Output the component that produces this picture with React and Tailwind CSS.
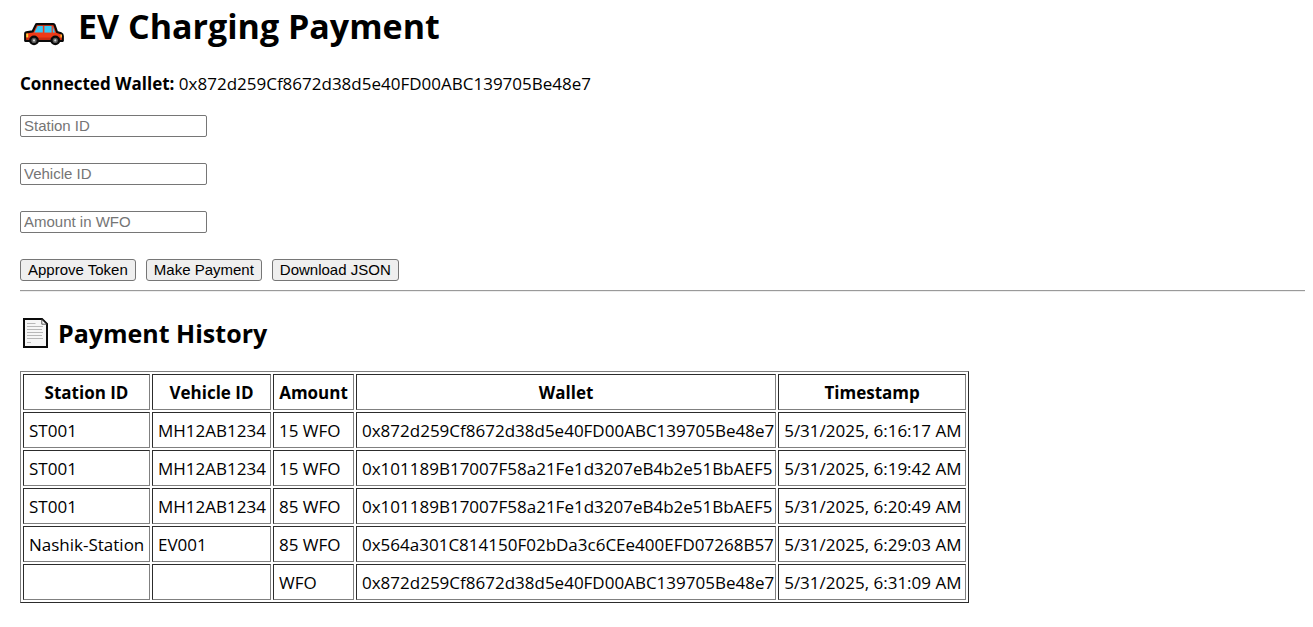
const columns = [
  { label: 'Station ID', width: 'w-[127px]' },
  { label: 'Vehicle ID', width: 'w-[119px]' },
  { label: 'Amount', width: 'w-[81px]' },
  { label: 'Wallet', width: 'w-[416px]' },
  { label: 'Timestamp', width: 'w-[188px]' },
];

const payments = [
  ['ST001', 'MH12AB1234', '15 WFO', '0x872d259Cf8672d38d5e40FD00ABC139705Be48e7', '5/31/2025, 6:16:17 AM'],
  ['ST001', 'MH12AB1234', '15 WFO', '0x101189B17007F58a21Fe1d3207eB4b2e51BbAEF5', '5/31/2025, 6:19:42 AM'],
  ['ST001', 'MH12AB1234', '85 WFO', '0x101189B17007F58a21Fe1d3207eB4b2e51BbAEF5', '5/31/2025, 6:20:49 AM'],
  ['Nashik-Station', 'EV001', '85 WFO', '0x564a301C814150F02bDa3c6CEe400EFD07268B57', '5/31/2025, 6:29:03 AM'],
  ['', '', 'WFO', '0x872d259Cf8672d38d5e40FD00ABC139705Be48e7', '5/31/2025, 6:31:09 AM'],
];

const cellBorder =
  'border border-t-[#2c2c2c] border-l-[#2c2c2c] border-r-[#808080] border-b-[#808080] whitespace-nowrap';

function CarIcon() {
  return (
    <svg viewBox="0 0 40 24" className="h-6 w-10" aria-hidden="true">
      <path
        d="M12.8 2.2H29.4Q30.2 2.2 30.5 3L33 10L37 11.2Q38.8 12 38.8 14V18.8H1.2V11.4Q1.2 10.6 2.2 10.4L8.6 9.4L11.8 2.9Q12.1 2.2 12.8 2.2Z"
        fill="#f03a17"
        stroke="#0a0a0a"
        strokeWidth="2.2"
        strokeLinejoin="round"
      />
      <path d="M2.3 15.4H37.7V17.8H2.3Z" fill="#c92a10" />
      <path d="M13.6 4H18.8V10.6H10.4Z" fill="#38c8f4" />
      <path d="M20.4 4H27.6V10.6H20.4Z" fill="#38c8f4" />
      <path d="M28.8 4.6L31 10.6H28.8Z" fill="#38c8f4" />
      <path d="M2.2 11.6H4.2V15.4H2.2Z" fill="#ffd23c" />
      <path d="M36.4 12.4H38V15.4H36.4Z" fill="#ffb02e" />
      <circle cx="10" cy="18.4" r="4.9" fill="#0a0a0a" />
      <circle cx="10" cy="18.4" r="2.6" fill="#5c5c5c" />
      <circle cx="10" cy="18.4" r="1.1" fill="#d0d0d0" />
      <circle cx="31.3" cy="18.4" r="4.9" fill="#0a0a0a" />
      <circle cx="31.3" cy="18.4" r="2.6" fill="#5c5c5c" />
      <circle cx="31.3" cy="18.4" r="1.1" fill="#d0d0d0" />
    </svg>
  );
}

function PageIcon() {
  return (
    <svg viewBox="0 0 25 30" className="h-[30px] w-[25px]" aria-hidden="true">
      <path d="M1 1H19L24 6V29H1Z" fill="#f6f6f6" stroke="#0a0a0a" strokeWidth="2" />
      <path d="M18.8 1.5V6.2H23.5Z" fill="#fff" stroke="#333" strokeWidth="0.8" />
      <path
        d="M4 5.5H12.5M4 8.5H20M4 11.5H19M4 14.5H20M4 17.5H19M4 20.5H20M4 24.5H8"
        stroke="#b8b8b8"
        strokeWidth="1"
      />
    </svg>
  );
}

function TextField({ label }) {
  return (
    <input
      type="text"
      aria-label={label}
      placeholder={label}
      className="block h-[22px] w-[187px] rounded-xs border border-[#767676] bg-white px-[3px] pb-0.5 font-['Liberation_Sans',Arial,sans-serif] text-[15px] leading-[18px] placeholder:text-[#757575]"
    />
  );
}

function ActionButton({ children }) {
  return (
    <button
      type="button"
      className="flex h-[22px] items-center rounded-[3px] border border-[#767676] bg-[#efefef] px-[7px] font-['Liberation_Sans',Arial,sans-serif] text-[15px] leading-5 whitespace-nowrap"
    >
      {children}
    </button>
  );
}

export default function App() {
  return (
    <main className="pt-1 pr-2 pb-6 pl-5 font-['Open_Sans','Noto_Sans',sans-serif] text-[17px] leading-6 text-black">
      <h1 className="flex items-center gap-3.5 pl-1 text-[34px] leading-[44px] font-bold">
        <span className="pt-4"><CarIcon /></span>
        EV Charging Payment
      </h1>
      <p className="mt-6">
        <strong className="font-bold">Connected Wallet:</strong> 0x872d259Cf8672d38d5e40FD00ABC139705Be48e7
      </p>
      <form className="mt-[19px]" onSubmit={(e) => e.preventDefault()}>
        <div className="flex flex-col gap-[26px]">
          <TextField label="Station ID" />
          <TextField label="Vehicle ID" />
          <TextField label="Amount in WFO" />
        </div>
        <div className="mt-[26px] flex gap-2.5">
          <ActionButton>Approve Token</ActionButton>
          <ActionButton>Make Payment</ActionButton>
          <ActionButton>Download JSON</ActionButton>
        </div>
      </form>
      <hr className="mt-[9px] h-0.5 border-t border-b border-t-[#9a9a9a] border-b-[#eeeeee]" />
      <h2 className="mt-6 flex items-center gap-2.5 pl-[3px] text-[25px] leading-[34px] font-bold">
        <PageIcon />
        Payment History
      </h2>
      <table className="mt-[21px] border-separate border-spacing-0.5 border border-t-[#808080] border-r-[#2c2c2c] border-b-[#2c2c2c] border-l-[#808080]">
        <thead>
          <tr>
            {columns.map((c) => (
              <th key={c.label} scope="col" className={`${cellBorder} ${c.width} pt-1.5 pb-1 text-center font-bold`}>
                {c.label}
              </th>
            ))}
          </tr>
        </thead>
        <tbody>
          {payments.map((row) => (
            <tr key={row[4]}>
              {row.map((value, i) => (
                <td key={i} className={`${cellBorder} h-9 pt-1.5 pr-px pb-1 pl-[5px]`}>{value}</td>
              ))}
            </tr>
          ))}
        </tbody>
      </table>
    </main>
  );
}
